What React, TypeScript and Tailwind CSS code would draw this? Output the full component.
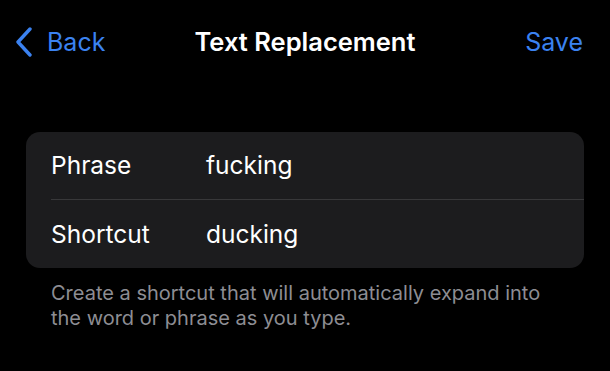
import React from "react";

export default function App() {
  return (
    <div
      className="w-[610px] h-[371px] bg-black text-white overflow-hidden"
      style={{ fontFamily: "Inter, 'Noto Sans', sans-serif" }}
    >
      <div className="relative h-[86px] flex items-center justify-between">
        <div className="flex items-center pl-[15px] text-[#3b82f0] mt-[-2px]">
          <svg width="18" height="30" viewBox="0 0 18 30" fill="none">
            <path d="M15 2 L3 15 L15 28" stroke="#3b82f0" strokeWidth="3.4" strokeLinecap="round" strokeLinejoin="round" />
          </svg>
          <span className="ml-[14px] text-[25px] leading-none">Back</span>
        </div>
        <div className="absolute left-0 right-0 text-center text-[25.5px] font-semibold leading-none mt-[-2px] pointer-events-none">
          Text Replacement
        </div>
        <div className="pr-[27px] text-[25px] leading-none text-[#3b82f0] mt-[-2px]">Save</div>
      </div>
      <div className="mt-[46px] mx-[26px] rounded-[14px] bg-[#1c1c1e]">
        <div className="h-[67px] flex items-center pl-[25px] text-[24.5px]">
          <span className="w-[155px]">Phrase</span>
          <span>fucking</span>
        </div>
        <div className="ml-[25px] h-px bg-[#38383a]" />
        <div className="h-[68px] flex items-center pl-[25px] text-[24.5px]">
          <span className="w-[155px]">Shortcut</span>
          <span>ducking</span>
        </div>
      </div>
      <div className="pl-[51px] pr-[50px] mt-[13px] text-[20px] leading-[25px] text-[#8d8d93]">
        Create a shortcut that will automatically expand into the word or phrase as you type.
      </div>
    </div>
  );
}
